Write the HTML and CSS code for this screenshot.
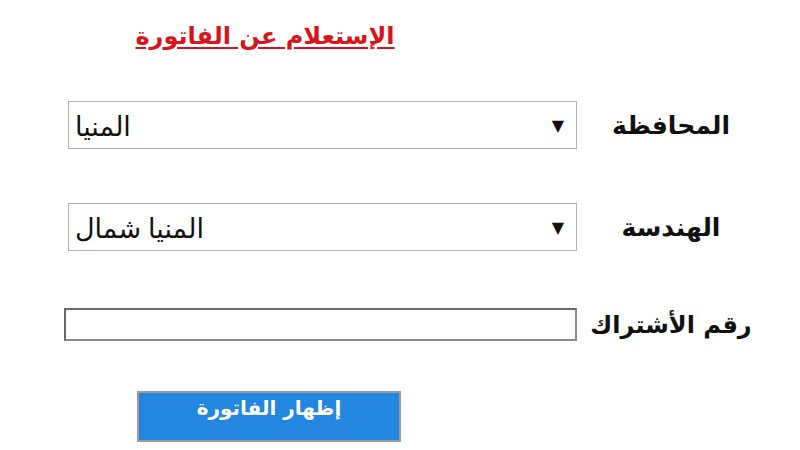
FILE: index.html
```html
<!DOCTYPE html>
<html lang="ar">
<head>
<meta charset="utf-8">
<link rel="stylesheet" href="styles.css">
</head>
<body>
<div class="page">
  <h1 class="title" dir="rtl">الإستعلام عن الفاتورة</h1>
  <div class="form">
    <div class="row row1">
      <div class="field">
        <div class="select"><span class="val" dir="rtl">المنيا</span><span class="arrow">▼</span></div>
      </div>
      <div class="label" dir="rtl">المحافظة</div>
    </div>
    <div class="row row2">
      <div class="field">
        <div class="select"><span class="val" dir="rtl">المنيا شمال</span><span class="arrow">▼</span></div>
      </div>
      <div class="label" dir="rtl">الهندسة</div>
    </div>
    <div class="row row3">
      <div class="field">
        <input class="textbox" type="text">
      </div>
      <div class="label" dir="rtl">رقم الأشتراك</div>
    </div>
    <div class="actions">
      <button class="btn" dir="rtl">إظهار الفاتورة</button>
    </div>
  </div>
</div>
</body>
</html>
```
FILE: styles.css
```css
html, body {
  margin: 0;
  padding: 0;
  background: #ffffff;
  width: 800px;
  height: 450px;
  overflow: hidden;
}
.page {
  font-family: "DejaVu Sans", "Noto Sans", sans-serif;
  padding-top: 18px;
}
.title {
  margin: 0 0 0 133px;
  width: 264px;
  text-align: center;
  font-size: 24px;
  font-weight: bold;
  line-height: 36px;
  color: #d9141b;
  text-decoration: underline;
  text-underline-offset: 3px;
  white-space: nowrap;
}
.form {
  padding-left: 64px;
}
.row {
  display: flex;
  align-items: center;
}
.row1 { margin-top: 47px; }
.row2 { margin-top: 54px; }
.row3 { margin-top: 57px; }
.field {
  width: 513px;
  display: flex;
  justify-content: flex-end;
}
.select {
  box-sizing: border-box;
  width: 509px;
  height: 48px;
  border: 1px solid #b3b3b3;
  background: #fff;
  display: flex;
  align-items: center;
  justify-content: space-between;
  padding: 0 12px 0 6px;
}
.val {
  font-family: "Noto Sans", "DejaVu Sans", sans-serif;
  font-size: 27px;
  line-height: 30px;
  color: #111;
  margin-top: 2px;
}
.arrow {
  font-size: 16px;
  color: #111;
}
.textbox {
  box-sizing: border-box;
  width: 513px;
  height: 33px;
  margin: 0;
  border: 2px solid #6a6a6a;
  border-right-color: #8a8a8a;
  border-bottom-color: #8a8a8a;
  background: #fff;
}
.label {
  width: 170px;
  margin-left: 9px;
  text-align: center;
  font-size: 25px;
  font-weight: bold;
  color: #111;
}
.row3 .label {
  font-size: 24px;
}
.actions {
  margin-top: 50px;
  padding-left: 73px;
}
.btn {
  box-sizing: border-box;
  width: 264px;
  height: 51px;
  margin: 0;
  background: #2387e1;
  border: 2px solid #9c9c9c;
  color: #ffffff;
  font-family: "DejaVu Sans", sans-serif;
  font-size: 20px;
  font-weight: bold;
  display: flex;
  justify-content: center;
  align-items: flex-start;
  padding-top: 3px;
}
```
